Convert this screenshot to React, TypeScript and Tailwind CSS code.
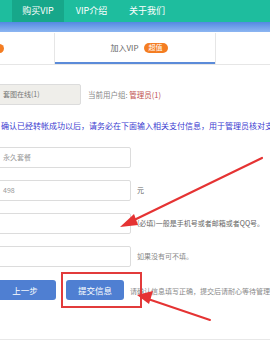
import React from "react"

const font = { fontFamily: '"Noto Sans CJK SC", "Noto Sans", sans-serif' }

function Field({ value, note, muted }: { value?: string; note?: string; muted?: boolean }) {
  return (
    <div className="flex items-center h-[21px]">
      <div className="w-[137px] h-[21px] shrink-0 border border-[#dcdcdc] rounded-[2px] bg-white flex items-center pl-[8px] text-[7px] text-[#999]">
        {value}
      </div>
      {note && (
        <span className={`ml-[6px] whitespace-nowrap text-[7px] ${muted ? "text-[#888]" : "text-[#666]"}`}>
          {note}
        </span>
      )}
    </div>
  )
}

export default function App() {
  return (
    <div className="relative w-[270px] h-[344px] overflow-hidden bg-white" style={font}>
      {/* top nav */}
      <div className="h-[22px] bg-[#1ebd9e] flex text-white text-[9px]">
        <div className="ml-[12px] w-[52px] h-full bg-[#17a78a] flex items-center justify-center">购买VIP</div>
        <div className="w-[55px] h-full flex items-center justify-center">VIP介绍</div>
        <div className="w-[56px] h-full flex items-center justify-center">关于我们</div>
      </div>
      <div className="h-[10px] bg-gradient-to-b from-[#5389e2] to-[#8db6f2]" />

      {/* tabs */}
      <div className="flex h-[32px] border-b border-[#e6e6e6] mt-[1px]">
        <div className="w-[55px] h-full border-r border-[#e6e6e6] flex items-center">
          <span className="-ml-[5px] w-[9px] h-[9px] rounded-full bg-[#f47d22]" />
        </div>
        <div className="w-[160px] h-full border-b-2 border-[#5b8bd9] flex items-center justify-center gap-[5px] pl-[8px]">
          <span className="text-[8px] text-[#666]">加入VIP</span>
          <span className="h-[10px] px-[5px] rounded-full bg-[#f47d22] text-white text-[7px] flex items-center">超值</span>
        </div>
        <div className="flex-1 h-full border-l border-[#e6e6e6]" />
      </div>

      <div className="-ml-[6px]">
        {/* user group */}
        <div className="mt-[19px] flex items-center">
          <div className="w-[87px] h-[21px] shrink-0 border border-[#dcdcdc] rounded-[2px] bg-[#efeeea] flex items-center pl-[8px] text-[7px] text-[#777]">
            套图在线(1)
          </div>
          <span className="ml-[7px] text-[7.5px] text-[#888] whitespace-nowrap">
            当前用户组: <span className="text-[#c0504d]">管理员(1)</span>
          </span>
        </div>

        {/* notice */}
        <div className="mt-[15px] ml-[7px] text-[8px] text-[#3a3ad0] whitespace-nowrap">
          确认已经转帐成功以后，请务必在下面输入相关支付信息，用于管理员核对支付
        </div>

        {/* fields */}
        <div className="mt-[15px] flex flex-col gap-[12px]">
          <Field value="永久套餐" />
          <Field value="498" note="元" />
          <Field note="(必填)一般是手机号或者邮箱或者QQ号。" />
          <Field note="如果没有可不填。" muted />
        </div>

        {/* buttons */}
        <div className="mt-[13px] flex items-center h-[20px]">
          <div className="w-[62px] h-[20px] shrink-0 rounded-[3px] bg-[#4f7fd2] text-white text-[8.5px] flex items-center justify-center">
            上一步
          </div>
          <div className="ml-[10px] w-[58px] h-[20px] shrink-0 rounded-[3px] bg-[#4f7fd2] text-white text-[8.5px] flex items-center justify-center">
            提交信息
          </div>
          <span className="ml-[6px] mt-[2px] text-[7px] text-[#888] whitespace-nowrap">
            请确认信息填写正确，提交后请耐心等待管理员审核
          </span>
        </div>
      </div>

      <div className="absolute left-0 right-0 top-[339px] h-px bg-[#e8e8e8]" />

      {/* red annotation box */}
      <div className="absolute left-[61px] top-[272px] w-[81px] h-[36px] border-2 border-[#e23b3b] pointer-events-none" />

      {/* red arrows */}
      <svg className="absolute inset-0 pointer-events-none" width="270" height="344">
        <line x1="262" y1="158" x2="130" y2="222" stroke="#e53333" strokeWidth="2.2" strokeLinecap="round" />
        <polygon points="120,227 134,214 138,225" fill="#e53333" />
        <line x1="210" y1="320" x2="148" y2="299" stroke="#e53333" strokeWidth="2" strokeLinecap="round" />
        <polygon points="137,295 153,291 149,304" fill="#e53333" />
      </svg>
    </div>
  )
}
